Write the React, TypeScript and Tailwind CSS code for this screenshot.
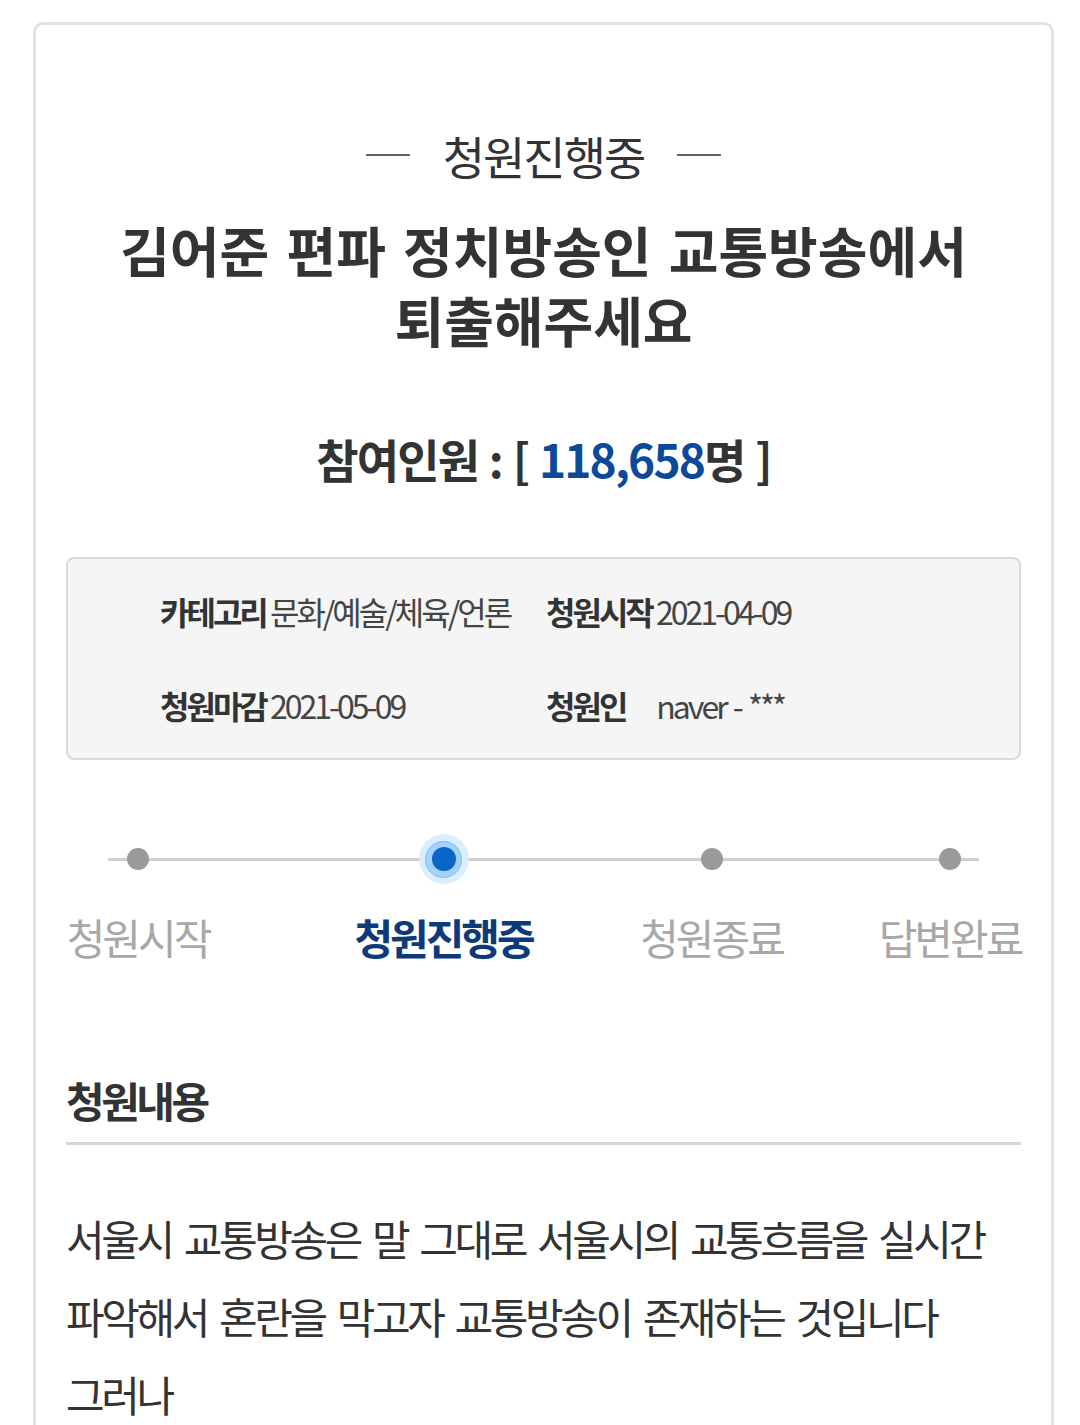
import React from "react";

const F = { fontFamily: '"Noto Sans CJK KR", "Noto Sans", sans-serif' };

function Dot({ active }: { active?: boolean }) {
  if (active) {
    return (
      <div className="w-[50px] h-[50px] rounded-full bg-[#dbeefd] flex items-center justify-center">
        <div className="w-[37px] h-[37px] rounded-full bg-[#a3d2fa] border border-[#7dbdf5] flex items-center justify-center">
          <div className="w-[24px] h-[24px] rounded-full bg-[#0a66c6]" />
        </div>
      </div>
    );
  }
  return <div className="w-[22px] h-[22px] rounded-full bg-[#9a9a9a]" />;
}

export default function App() {
  return (
    <div className="w-[1080px] min-h-[1425px] bg-white overflow-hidden" style={F}>
      <div className="mt-[22px] ml-[33px] mr-[26px] border-[3px] border-[#e3e3e3] rounded-[10px] px-[30px] pt-[100px] pb-[80px] text-[#333]">
        {/* status */}
        <div className="flex items-center justify-center gap-[33px]">
          <div className="w-[44px] h-[2px] bg-[#666]" />
          <div className="text-[46px] leading-[60px] tracking-[-2px] text-[#333]">청원진행중</div>
          <div className="w-[44px] h-[2px] bg-[#666]" />
        </div>
        {/* title */}
        <h1 className="mt-[30px] text-center text-[54px] leading-[70px] font-bold tracking-[0px] [word-spacing:5px] text-[#333]">
          김어준 편파 정치방송인 교통방송에서
          <br />
          퇴출해주세요
        </h1>
        {/* participants */}
        <div className="mt-[73px] text-center text-[46px] leading-[60px] font-bold tracking-[-1.8px] [word-spacing:2px] text-[#333]">
          참여인원 : [ <span className="text-[#0c4a99]">118,658</span>명 ]
        </div>
        {/* info box */}
        <div className="mt-[69px] bg-[#f5f5f5] border-[2px] border-[#dadada] rounded-[8px] pl-[92px] pt-[32px] pb-[33px] text-[32px] leading-[40px] tracking-[-3px]">
          <div className="flex">
            <div className="w-[386px]">
              <span className="font-bold text-[#333]">카테고리</span>{" "}
              <span className="text-[#444]">문화/예술/체육/언론</span>
            </div>
            <div>
              <span className="font-bold text-[#333]">청원시작</span>{" "}
              <span className="text-[#444]">2021-04-09</span>
            </div>
          </div>
          <div className="flex mt-[54px]">
            <div className="w-[386px]">
              <span className="font-bold text-[#333]">청원마감</span>{" "}
              <span className="text-[#444]">2021-05-09</span>
            </div>
            <div className="flex">
              <span className="font-bold text-[#333]">청원인</span>
              <span className="text-[#444] ml-[31px] [word-spacing:3px]">naver - ***</span>
            </div>
          </div>
        </div>
        {/* timeline */}
        <div className="relative mt-[74px]">
          <div className="absolute left-[42px] right-[42px] top-[24px] h-[3px] bg-[#cfcfcf]" />
          <div className="relative flex">
            <div className="w-[144px] flex flex-col items-center">
              <div className="h-[50px] flex items-center"><Dot /></div>
            </div>
            <div className="ml-[144px] w-[179px] flex flex-col items-center">
              <div className="h-[50px] flex items-center"><Dot active /></div>
            </div>
            <div className="ml-[107px] w-[143px] flex flex-col items-center">
              <div className="h-[50px] flex items-center"><Dot /></div>
            </div>
            <div className="ml-[96px] w-[142px] flex flex-col items-center">
              <div className="h-[50px] flex items-center"><Dot /></div>
            </div>
          </div>
          <div className="flex mt-[25px] text-[42px] leading-[56px] tracking-[-3px] whitespace-nowrap">
            <div className="w-[144px] flex justify-center text-[#a8a8a8]">청원시작</div>
            <div className="ml-[144px] w-[179px] flex justify-center font-bold text-[#0d3b7a]">청원진행중</div>
            <div className="ml-[107px] w-[143px] flex justify-center text-[#a8a8a8]">청원종료</div>
            <div className="ml-[96px] w-[142px] flex justify-center text-[#a8a8a8]">답변완료</div>
          </div>
        </div>
        {/* content */}
        <h2 className="mt-[107px] text-[42px] leading-[56px] font-bold tracking-[-3.5px] text-[#333] border-b-[3px] border-[#d5d5d5] pb-[14px]">
          청원내용
        </h2>
        <div className="mt-[54px] text-[42px] leading-[78px] tracking-[-3.4px] [word-spacing:6px] text-[#333]">
          <p>서울시 교통방송은 말 그대로 서울시의 교통흐름을 실시간</p>
          <p>파악해서 혼란을 막고자 교통방송이 존재하는 것입니다</p>
          <p>그러나</p>
          <p>&nbsp;</p>
        </div>
      </div>
    </div>
  );
}
